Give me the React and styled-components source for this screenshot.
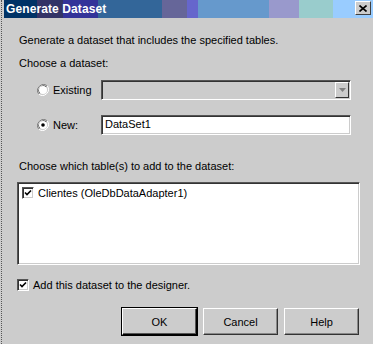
import React from 'react';
import styled, { createGlobalStyle } from 'styled-components';

const Global = createGlobalStyle`
  html, body { margin: 0; padding: 0; background: #cccccc; }
  body { font-family: "Liberation Sans", Arial, sans-serif; font-size: 11px; color: #000; }
`;

const Window = styled.div`
  width: 373px;
  height: 344px;
  display: flex;
  background: #cccccc;
  overflow: hidden;
`;

const Frame = styled.div`
  width: 4px;
  flex: none;
  background: #cccccc;
  border-left: 1px dotted #555;
  box-sizing: border-box;
  margin-left: 1px;
`;

const Main = styled.div`
  flex: 1;
  display: flex;
  flex-direction: column;
  margin-left: -1px;
`;

const TitleBar = styled.div`
  height: 18px;
  display: flex;
  align-items: center;
  justify-content: space-between;
  padding: 0 2px;
  background: linear-gradient(to right,
    #003366 0 33px, #333366 33px 59px, #333399 59px 94px, #336699 94px 158px,
    #666699 158px 183px, #6666cc 183px 194px, #6699cc 194px 265px,
    #9999cc 265px 295px, #99cccc 295px 329px, #99ccff 329px);
`;

const Title = styled.span`
  color: #fff;
  font-weight: bold;
  font-size: 12px;
  letter-spacing: 0.1px;
`;

const CloseBtn = styled.div`
  width: 14px;
  height: 12px;
  margin-top: -2px;
  background: #cccccc;
  border: 1px solid;
  border-color: #fff #404040 #404040 #fff;
  display: flex;
  align-items: center;
  justify-content: center;
`;

const Body = styled.div`
  display: flex;
  flex-direction: column;
  padding: 16px 0 0 15px;
`;

const Label = styled.div`
  height: 13px;
  line-height: 13px;
  margin-top: ${p => p.$mt || 0}px;
`;

const OptionRow = styled.div`
  display: flex;
  align-items: center;
  height: 20px;
  margin-top: ${p => p.$mt || 0}px;
  padding-left: 18px;
`;

const RadioLabel = styled.label`
  display: flex;
  align-items: center;
  gap: 4px;
  width: 64px;
`;

const Sunken = styled.div`
  box-sizing: border-box;
  border: 1px solid;
  border-color: #555 #fff #fff #555;
  box-shadow: inset 1px 1px 0 #333, inset -1px -1px 0 #cccccc;
`;

const Combo = styled(Sunken)`
  width: 250px;
  height: 20px;
  background: #cccccc;
  display: flex;
  justify-content: flex-end;
  padding: 1px;
`;

const DropBtn = styled.div`
  width: 14px;
  height: 16px;
  box-sizing: border-box;
  border: 1px solid;
  border-color: #fff #333 #333 #fff;
  display: flex;
  align-items: center;
  justify-content: center;
`;

const TextInput = styled(Sunken)`
  width: 250px;
  height: 20px;
  background: #fff;
  padding: 0 3px;
  line-height: 17px;
`;

const ListBox = styled(Sunken)`
  width: 343px;
  height: 83px;
  background: #fff;
  margin-top: 9px;
  margin-left: -2px;
  padding: 3px 4px;
`;

const CheckRow = styled.div`
  display: flex;
  align-items: center;
  gap: 4px;
  height: 13px;
  margin-top: ${p => p.$mt || 0}px;
  margin-left: ${p => p.$ml || 0}px;
`;

const Box = styled(Sunken)`
  width: 12px;
  height: 12px;
  flex: none;
  background: #fff;
  display: flex;
  align-items: center;
  justify-content: center;
`;

const Buttons = styled.div`
  display: flex;
  gap: 6px;
  margin-top: 17px;
  padding-left: 103px;
`;

const Button = styled.div`
  box-sizing: border-box;
  width: 75px;
  height: 27px;
  display: flex;
  align-items: center;
  justify-content: center;
  background: #cccccc;
  border: 1px solid;
  border-color: #fff #333 #333 #fff;
  box-shadow: inset -1px -1px 0 #888;
  ${p => p.$default && 'border-color: #fff #000 #000 #fff; box-shadow: inset -1px -1px 0 #555, 0 0 0 1px #000;'}
`;

function Radio({ checked }) {
  return (
    <svg width="12" height="12" viewBox="0 0 12 12">
      <path d="M10.2 1.8A6 6 0 0 0 1.8 10.2" fill="none" stroke="#808080" />
      <path d="M9.3 2.7A4.8 4.8 0 0 0 2.7 9.3" fill="none" stroke="#333" />
      <path d="M1.8 10.2A6 6 0 0 0 10.2 1.8" fill="none" stroke="#fff" />
      <circle cx="6" cy="6" r="4" fill="#fff" />
      {checked && <circle cx="6" cy="6" r="1.8" fill="#000" />}
    </svg>
  );
}

function Check() {
  return (
    <svg width="8" height="8" viewBox="0 0 8 8">
      <path d="M1 3.5 L3 5.5 L7 1.5" fill="none" stroke="#000" strokeWidth="1.6" />
    </svg>
  );
}

export default function App() {
  return (
    <>
      <Global />
      <Window>
        <Frame />
        <Main>
          <TitleBar>
            <Title>Generate Dataset</Title>
            <CloseBtn>
              <svg width="8" height="7" viewBox="0 0 8 7">
                <path d="M0.5 0.5 L7.5 6.5 M7.5 0.5 L0.5 6.5" stroke="#000" strokeWidth="1.6" />
              </svg>
            </CloseBtn>
          </TitleBar>
          <Body>
            <Label>Generate a dataset that includes the specified tables.</Label>
            <Label $mt={10}>Choose a dataset:</Label>
            <OptionRow $mt={10}>
              <RadioLabel><Radio /> Existing</RadioLabel>
              <Combo>
                <DropBtn>
                  <svg width="7" height="4" viewBox="0 0 7 4">
                    <path d="M0 0 H7 L3.5 4 Z" fill="#808080" />
                  </svg>
                </DropBtn>
              </Combo>
            </OptionRow>
            <OptionRow $mt={15}>
              <RadioLabel><Radio checked /> New:</RadioLabel>
              <TextInput>DataSet1</TextInput>
            </OptionRow>
            <Label $mt={25}>Choose which table(s) to add to the dataset:</Label>
            <ListBox>
              <CheckRow>
                <Box><Check /></Box>
                Clientes (OleDbDataAdapter1)
              </CheckRow>
            </ListBox>
            <CheckRow $mt={13} $ml={-2}>
              <Box><Check /></Box>
              Add this dataset to the designer.
            </CheckRow>
            <Buttons>
              <Button $default>OK</Button>
              <Button>Cancel</Button>
              <Button>Help</Button>
            </Buttons>
          </Body>
        </Main>
      </Window>
    </>
  );
}
